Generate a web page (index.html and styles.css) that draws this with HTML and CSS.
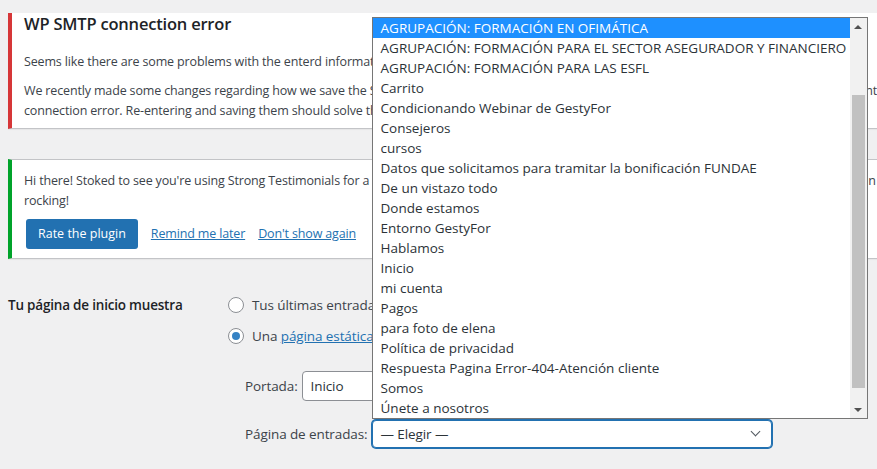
FILE: index.html
```html
<!DOCTYPE html>
<html lang="es">
<head>
    <meta charset="UTF-8">
    <title>Ajustes de lectura</title>
    <link rel="stylesheet" href="styles.css">
</head>
<body>
<div class="wrap">

    <!-- SMTP error notice -->
    <div class="notice notice-error">
        <h2>WP SMTP connection error</h2>
        <p class="first">Seems like there are some problems with the enterd information. Please re-check your SMTP settings.</p>
        <p>We recently made some changes regarding how we save the SMTP password and other credentials, this may have been the reason behind this current<br>connection error. Re-entering and saving them should solve the issue.</p>
    </div>

    <!-- Strong Testimonials notice -->
    <div class="notice notice-success">
        <p>Hi there! Stoked to see you're using Strong Testimonials for a while now. Hope you like it! If you do, please leave a review, that helps us keep the plugin<br>rocking!</p>
        <div class="notice-actions">
            <a href="#" class="button-primary">Rate the plugin</a>
            <a href="#">Remind me later</a>
            <a href="#">Don't show again</a>
        </div>
    </div>

    <!-- Front page settings -->
    <div class="form-row">
        <div class="row-label">Tu página de inicio muestra</div>
        <div class="row-field">
            <label class="radio-line"><span class="radio"></span><span>Tus últimas entradas</span></label>
            <label class="radio-line"><span class="radio checked"></span><span>Una <a href="#">página estática</a> (seleccionar abajo)</span></label>

            <div class="page-picks">
                <div class="pick-line">
                    <span>Portada:</span>
                    <div class="select">Inicio<span class="chevron"></span></div>
                </div>
                <div class="pick-line">
                    <span>Página de entradas:</span>
                    <div class="select-holder">
                        <div class="select focused">— Elegir —<span class="chevron"></span></div>

                        <!-- open dropdown list -->
                        <div class="dropdown">
                            <ul class="options">
                                <li class="active">AGRUPACIÓN: FORMACIÓN EN OFIMÁTICA</li>
                                <li>AGRUPACIÓN: FORMACIÓN PARA EL SECTOR ASEGURADOR Y FINANCIERO</li>
                                <li>AGRUPACIÓN: FORMACIÓN PARA LAS ESFL</li>
                                <li>Carrito</li>
                                <li>Condicionando Webinar de GestyFor</li>
                                <li>Consejeros</li>
                                <li>cursos</li>
                                <li>Datos que solicitamos para tramitar la bonificación FUNDAE</li>
                                <li>De un vistazo todo</li>
                                <li>Donde estamos</li>
                                <li>Entorno GestyFor</li>
                                <li>Hablamos</li>
                                <li>Inicio</li>
                                <li>mi cuenta</li>
                                <li>Pagos</li>
                                <li>para foto de elena</li>
                                <li>Política de privacidad</li>
                                <li>Respuesta Pagina Error-404-Atención cliente</li>
                                <li>Somos</li>
                                <li>Únete a nosotros</li>
                            </ul>
                            <div class="scrollbar">
                                <span class="arrow up"></span>
                                <div class="track"><div class="thumb"></div></div>
                                <span class="arrow down"></span>
                            </div>
                        </div>
                    </div>
                </div>
            </div>
        </div>
    </div>

</div>
</body>
</html>
```

FILE: styles.css
```css
html {
    overflow: hidden;
}

body {
    margin: 0;
    background-color: #f0f0f1;
    color: #3c434a;
    font-family: "Open Sans", "Noto Sans", sans-serif;
    font-size: 12.5px;
    letter-spacing: -0.15px;
    line-height: 19.5px;
}

a {
    color: #2271b1;
}

.wrap {
    padding-left: 8px;
    width: 1100px;
}

/* Admin notices */
.notice {
    background: #fff;
    border: 1px solid #c3c4c7;
    border-left-width: 4px;
    box-shadow: 0 1px 1px rgba(0, 0, 0, 0.04);
    padding: 0 12px;
    white-space: nowrap;
}

.notice p {
    margin: 0;
}

.notice-error {
    border-left-color: #d63638;
    border-top: 0;
    padding-bottom: 8px;
}

.notice-error h2 {
    color: #1d2327;
    font-size: 16.5px;
    font-weight: 600;
    letter-spacing: -0.2px;
    line-height: 22px;
    margin: 13px 0 17px;
}

.notice-error p.first {
    margin-bottom: 9.5px;
}

.notice-success {
    border-left-color: #00a32a;
    margin-top: 30px;
    padding-top: 11px;
    padding-bottom: 9px;
}

.notice-actions {
    display: flex;
    align-items: center;
    gap: 13px;
    margin-top: 9px;
}

.button-primary {
    background: #2271b1;
    color: #fff;
    border-radius: 3px;
    margin-left: 2px;
    padding: 0 12px;
    line-height: 30px;
    letter-spacing: 0;
    text-decoration: none;
}

/* Settings row */
.form-row {
    display: flex;
    margin-top: 36px;
    font-size: 13.5px;
    letter-spacing: -0.1px;
    color: #1d2327;
}

.row-label {
    width: 220px;
    font-weight: 600;
    letter-spacing: -0.2px;
    line-height: 20px;
}

.row-field {
    color: #3c434a;
    line-height: 20px;
}

.radio-line {
    display: flex;
    align-items: center;
    white-space: nowrap;
    margin-bottom: 11px;
}

.radio {
    width: 14px;
    height: 14px;
    border: 1px solid #8c8f94;
    border-radius: 50%;
    background: #fff;
    margin-right: 8px;
    display: flex;
    align-items: center;
    justify-content: center;
}

.radio.checked::before {
    content: "";
    width: 8px;
    height: 8px;
    border-radius: 50%;
    background: #3582c4;
}

.page-picks {
    padding: 14px 0 0 17px;
}

.pick-line {
    display: flex;
    align-items: center;
    gap: 4px;
    margin-bottom: 19px;
}

.select {
    position: relative;
    box-sizing: border-box;
    width: 400px;
    height: 30px;
    background: #fff;
    border: 1px solid #8c8f94;
    border-radius: 4px;
    padding: 0 8px;
    line-height: 28px;
    color: #2c3338;
}

.select.focused {
    height: 28px;
    line-height: 26px;
    border-color: #2271b1;
    box-shadow: 0 0 0 1px #2271b1;
}

.chevron {
    position: absolute;
    right: 12px;
    top: 50%;
    margin-top: -6px;
    width: 6px;
    height: 6px;
    border-right: 1.5px solid #50575e;
    border-bottom: 1.5px solid #50575e;
    transform: rotate(45deg);
}

/* Open dropdown list */
.select-holder {
    position: relative;
}

.dropdown {
    position: absolute;
    left: 0;
    bottom: calc(100% + 1px);
    width: 496px;
    display: flex;
    background: #fff;
    border: 1px solid #767676;
    box-sizing: border-box;
    letter-spacing: 0;
    z-index: 2;
}

.options {
    list-style: none;
    margin: 0;
    padding: 0;
    flex: 1;
    min-width: 0;
    overflow: hidden;
    color: #2c3338;
    font-size: 13.5px;
}

.options li {
    height: 20px;
    line-height: 20px;
    padding-left: 8px;
    white-space: nowrap;
}

.options li.active {
    background: #1e90ff;
    color: #fff;
}

.scrollbar {
    width: 17px;
    flex-shrink: 0;
    background: #f1f1f1;
    display: flex;
    flex-direction: column;
    align-items: center;
}

.arrow {
    width: 0;
    height: 0;
    border-left: 4px solid transparent;
    border-right: 4px solid transparent;
    margin: 7px 0 6px;
}

.arrow.up {
    border-bottom: 4px solid #505050;
}

.arrow.down {
    border-top: 4px solid #505050;
}

.track {
    flex: 1;
    width: 100%;
    display: flex;
    flex-direction: column;
    justify-content: flex-end;
    padding: 0 2px 13px;
    box-sizing: border-box;
}

.thumb {
    height: 293px;
    background: #c1c1c1;
}
```
